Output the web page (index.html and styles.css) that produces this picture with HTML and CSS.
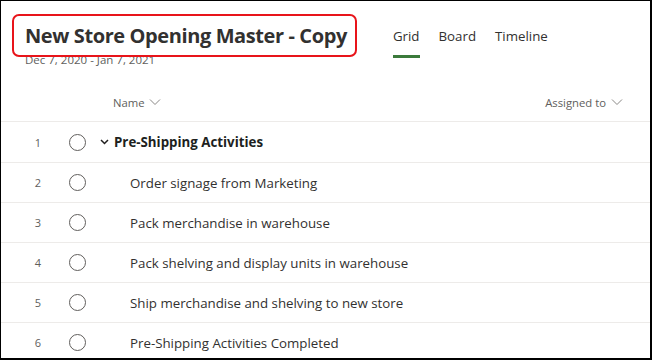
FILE: index.html
```html
<!DOCTYPE html>
<html lang="en">

<head>
    <meta charset="UTF-8">
    <title>New Store Opening Master - Copy</title>
    <link rel="stylesheet" href="styles.css">
</head>

<body>
    <div class="frame">
        <!-- Plan header -->
        <div class="top">
            <div class="plan-title">
                <h1>New Store Opening Master - Copy</h1>
                <p class="dates">Dec 7, 2020 - Jan 7, 2021</p>
                <div class="highlight"></div>
            </div>
            <nav class="tabs">
                <a class="tab active">Grid</a>
                <a class="tab">Board</a>
                <a class="tab">Timeline</a>
            </nav>
        </div>

        <!-- Column headers -->
        <div class="row head">
            <span class="num"></span>
            <span class="check-space"></span>
            <span class="name-head">Name
                <svg width="12" height="8" viewBox="0 0 12 8"><path d="M1 1.5 6 6.5 11 1.5" fill="none" stroke="#8a8886" stroke-width="1"/></svg>
            </span>
            <span class="assign-head">Assigned to
                <svg width="12" height="8" viewBox="0 0 12 8"><path d="M1 1.5 6 6.5 11 1.5" fill="none" stroke="#8a8886" stroke-width="1"/></svg>
            </span>
        </div>

        <!-- Tasks -->
        <div class="row task first">
            <span class="num">1</span>
            <span class="circle"></span>
            <span class="name group">
                <svg class="chev" width="9" height="6" viewBox="0 0 9 6"><path d="M1 1 4.5 4.5 8 1" fill="none" stroke="#201f1e" stroke-width="1.5"/></svg>
                Pre-Shipping Activities
            </span>
        </div>
        <div class="row task">
            <span class="num">2</span>
            <span class="circle"></span>
            <span class="name child">Order signage from Marketing</span>
        </div>
        <div class="row task">
            <span class="num">3</span>
            <span class="circle"></span>
            <span class="name child">Pack merchandise in warehouse</span>
        </div>
        <div class="row task">
            <span class="num">4</span>
            <span class="circle"></span>
            <span class="name child">Pack shelving and display units in warehouse</span>
        </div>
        <div class="row task">
            <span class="num">5</span>
            <span class="circle"></span>
            <span class="name child">Ship merchandise and shelving to new store</span>
        </div>
        <div class="row task">
            <span class="num">6</span>
            <span class="circle"></span>
            <span class="name child">Pre-Shipping Activities Completed</span>
        </div>
    </div>
</body>

</html>
```

FILE: styles.css
```css
/* Page */
body {
    margin: 0;
    font-family: 'Open Sans', 'Noto Sans', sans-serif;
    color: #323130;
    background: #fff;
}

.frame {
    box-sizing: border-box;
    width: 652px;
    height: 360px;
    border: 1px solid #000;
    border-right-width: 2px;
    border-bottom-width: 2px;
    overflow: hidden;
}

/* Header */
.top {
    display: flex;
    align-items: flex-start;
    height: 82px;
}

.plan-title {
    position: relative;
    padding: 21px 0 0 24px;
}

.plan-title h1 {
    margin: 0;
    font-size: 20px;
    font-weight: 700;
    line-height: 28px;
    color: #323130;
    letter-spacing: -0.4px;
}

.dates {
    margin: 3px 0 0;
    font-size: 11.5px;
    line-height: 14px;
    color: #605e5c;
}

/* red annotation box drawn over the title */
.highlight {
    position: absolute;
    left: 11px;
    top: 13px;
    width: 341px;
    height: 39px;
    border: 2px solid #e8141a;
    border-radius: 7px;
}

.tabs {
    display: flex;
    gap: 19px;
    margin: 25px 0 0 46px;
}

.tab {
    font-size: 13.3px;
    line-height: 20px;
    padding-bottom: 9px;
    border-bottom: 3px solid transparent;
    color: #323130;
}

.tab.active {
    border-bottom-color: #3b7a3b;
}

/* Rows */
.row {
    box-sizing: border-box;
    display: flex;
    align-items: center;
    height: 40px;
    border-bottom: 1px solid #edebe9;
}

.row.head {
    height: 39px;
    font-size: 11.3px;
    color: #605e5c;
}

.row.first {
    height: 41px;
}

.num {
    width: 18px;
    margin-left: 28px;
    text-align: center;
    font-size: 11px;
    color: #605e5c;
}

.check-space {
    width: 16px;
    margin-left: 22px;
}

.circle {
    box-sizing: border-box;
    width: 17px;
    height: 17px;
    margin-left: 22px;
    border: 1px solid #605e5c;
    border-radius: 50%;
}

.name-head {
    margin-left: 28px;
    display: flex;
    align-items: center;
    gap: 4px;
}

.assign-head {
    margin-left: auto;
    margin-right: 27px;
    display: flex;
    align-items: center;
    gap: 5px;
}

.name {
    font-size: 13.3px;
    display: flex;
    align-items: center;
}

.name.group {
    margin-left: 14px;
    font-weight: 700;
    color: #201f1e;
}

.chev {
    margin-right: 5px;
}

.name.child {
    margin-left: 44px;
}
```
